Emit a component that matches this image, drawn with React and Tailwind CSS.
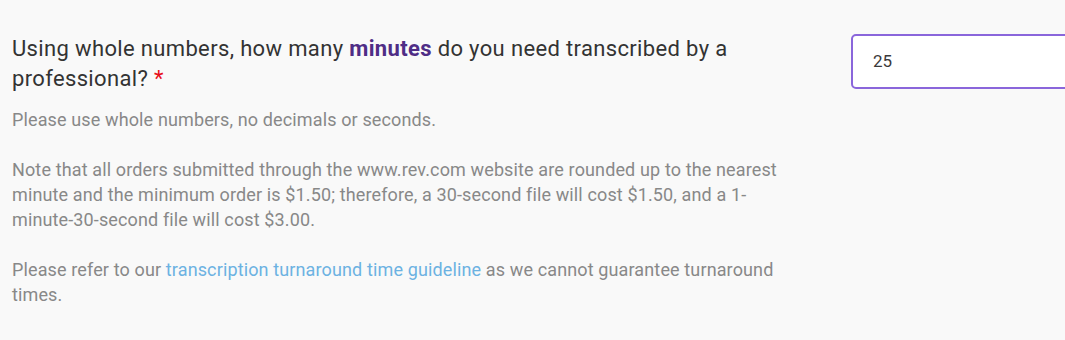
export default function App() {
  return (
    <div className="min-h-[340px] w-full bg-[#f9f9f9] font-['Roboto',sans-serif] overflow-hidden">
      <div className="flex pt-[34px] pl-3">
        <div className="w-[780px] shrink-0">
          <div className="text-[22px] leading-[30px] tracking-[0.35px] text-[#333333]">
            Using whole numbers, how many <span className="font-bold text-[#4f2d86]">minutes</span> do you need transcribed by a professional? <span className="text-[#e8101a]">*</span>
          </div>
          <div className="mt-[13px] text-[18px] leading-[25px] tracking-[0.13px] text-[#888888]">
            <p>Please use whole numbers, no decimals or seconds.</p>
            <p className="mt-[25px]">Note that all orders submitted through the www.rev.com website are rounded up to the nearest minute and the minimum order is $1.50; therefore, a 30-second file will cost $1.50, and a 1-minute-30-second file will cost $3.00.</p>
            <p className="mt-[25px]">Please refer to our <a className="text-[#6cb2e2]">transcription turnaround time guideline</a> as we cannot guarantee turnaround times.</p>
          </div>
        </div>
        <div className="ml-[59px] shrink-0">
          <div className="w-[260px] h-[55px] rounded-[5px] border-2 border-[#8a66db] bg-white flex items-center pl-[20px] text-[17px] text-[#3a3a3a]">
            25
          </div>
        </div>
      </div>
    </div>
  );
}
